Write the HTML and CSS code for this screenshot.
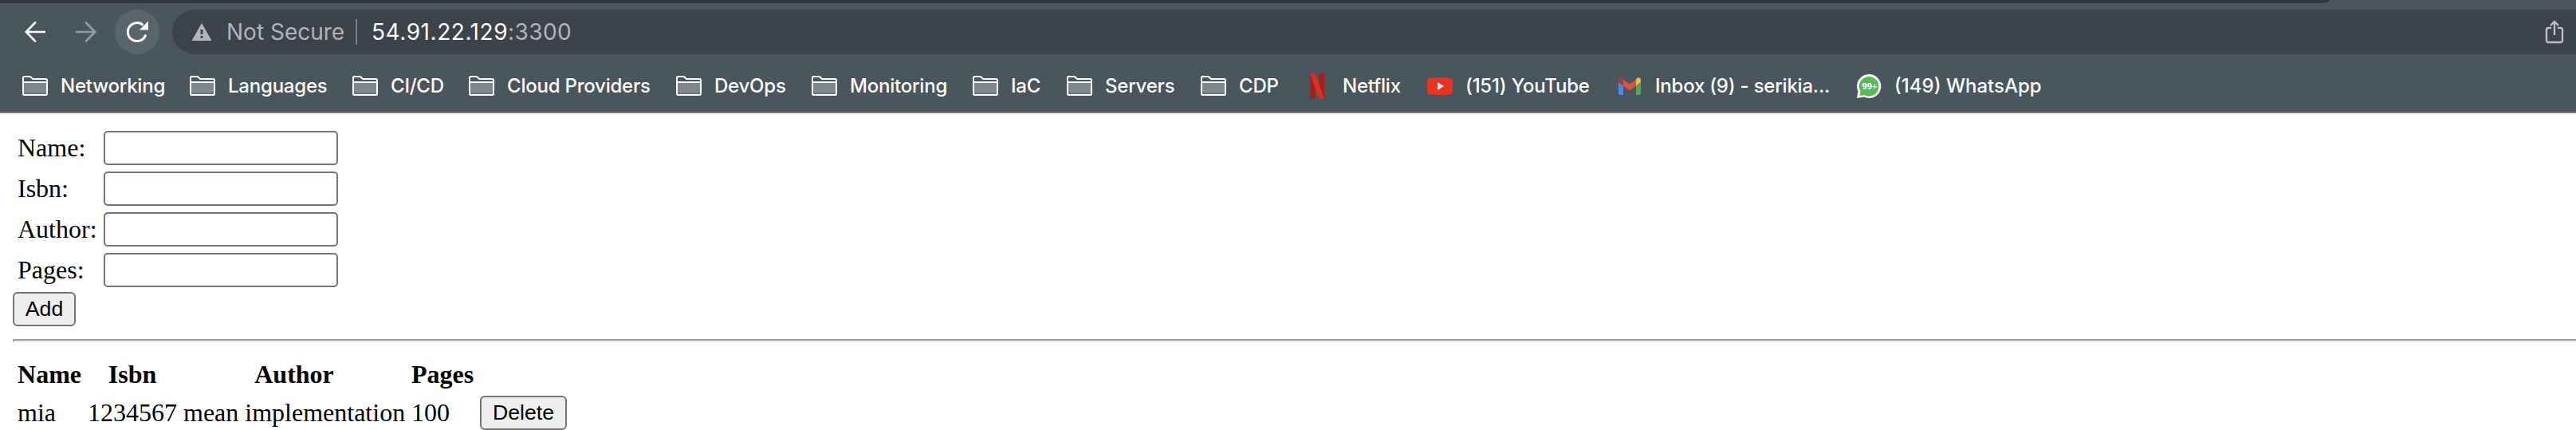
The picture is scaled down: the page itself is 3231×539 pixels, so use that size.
FILE: index.html
```html
<!DOCTYPE html>
<html lang="en">
<head>
<meta charset="utf-8">
<title>54.91.22.129:3300</title>
<link rel="stylesheet" href="styles.css">
</head>
<body>
<svg width="0" height="0" class="defs" aria-hidden="true">
  <symbol id="folder" viewBox="0 0 32 26">
    <path d="M1 8h30v14H1z" fill="#80888f"/>
    <path d="M1 21h30v3H1z" fill="#6f767f"/>
    <path d="M1 8h30M1 2.500q0-1.500 1.500-1.500H9q1 0 2 1l2 2h16.500q1.500 0 1.500 1.500v17q0 1.500-1.500 1.500h-27Q1 24 1 22.500z" fill="none" stroke="#fff" stroke-width="2"/>
  </symbol>
</svg>
<header class="chrome">
  <div class="tabstrip"></div>
  <div class="toolbar">
    <svg class="nav back" viewBox="0 0 26 26"><path d="M25 13H2M13 1.500 1.800 13 13 24.500" fill="none" stroke="#fff" stroke-width="2.700" stroke-linecap="round"/></svg>
    <svg class="nav forward" viewBox="0 0 26 26"><path d="M1 13h23M13 1.500 24.200 13 13 24.500" fill="none" stroke="#939aa0" stroke-width="2.700" stroke-linecap="round"/></svg>
    <span class="reload"><svg viewBox="0 0 28 28"><path d="M24.800 17.500A11.500 11.500 0 1 1 21.500 5.500" fill="none" stroke="#fff" stroke-width="3"/><path d="M28 .5V11.500H17z" fill="#fff"/></svg></span>
    <div class="omnibox">
      <svg class="warning" viewBox="0 0 26 22"><path fill-rule="evenodd" d="M13 0 25.500 22H.5zM11.500 8v6h3V8zM11.500 16v3h3v-3z" fill="#b3b7ba"/></svg>
      <span class="insecure">Not Secure</span>
      <span class="divider"></span>
      <span class="host">54.91.22.129</span><span class="port">:3300</span>
      <svg class="share" viewBox="0 0 24 30"><path d="M8 10H4.500Q2 10 2 12.500v13Q2 28 4.500 28h15q2.500 0 2.500-2.500v-13Q22 10 19.500 10H16M12 19V2M7 7l5-5 5 5" fill="none" stroke="#bdbdbd" stroke-width="2.400"/></svg>
    </div>
  </div>
  <nav class="bookmarks">
    <a class="b1"><svg class="folder"><use href="#folder"/></svg><span>Networking</span></a>
    <a class="b2"><svg class="folder"><use href="#folder"/></svg><span>Languages</span></a>
    <a class="b3"><svg class="folder"><use href="#folder"/></svg><span>CI/CD</span></a>
    <a class="b4"><svg class="folder"><use href="#folder"/></svg><span>Cloud Providers</span></a>
    <a class="b5"><svg class="folder"><use href="#folder"/></svg><span>DevOps</span></a>
    <a class="b6"><svg class="folder"><use href="#folder"/></svg><span>Monitoring</span></a>
    <a class="b7"><svg class="folder"><use href="#folder"/></svg><span>IaC</span></a>
    <a class="b8"><svg class="folder"><use href="#folder"/></svg><span>Servers</span></a>
    <a class="b9"><svg class="folder"><use href="#folder"/></svg><span>CDP</span></a>
    <a class="b10"><svg class="favicon" viewBox="0 0 32 32"><path d="M7 0h6.500v32H7zM18.500 0H25v32h-6.500z" fill="#a5211b"/><path d="M7 0h6.500L25 32h-6.500z" fill="#d93025"/></svg><span>Netflix</span></a>
    <a class="b11"><svg class="favicon" viewBox="0 0 32 32"><path d="M4 5.500Q16 4.500 28 5.500q4 .5 4 4.500v12q0 4-4 4.500-12 1-24 0Q0 26 0 22V10q0-4 4-4.500z" fill="#e93323"/><path d="M13 11.300v9.400l8-4.700z" fill="#fff"/></svg><span>(151) YouTube</span></a>
    <a class="b12"><svg class="favicon" viewBox="0 0 32 32"><path d="M2 11l6 4.500V27H4q-2 0-2-2z" fill="#4f86ec"/><path d="M30 11l-6 4.500V27h4q2 0 2-2z" fill="#58a55c"/><path d="M8 7.500l8 6 8-6v8l-8 6-8-6z" fill="#d95140"/><path d="M2 11V8.500C2 5 6 4 8 7.500v8z" fill="#b3362b"/><path d="M30 11V8.500C30 5 26 4 24 7.500v8z" fill="#f2bf42"/></svg><span>Inbox (9) - serikia...</span></a>
    <a class="b13"><svg class="favicon" viewBox="0 0 32 32"><path d="M16 1a15 15 0 1 1-6 28.600L1 31l1.500-8.500A15 15 0 0 1 16 1z" fill="#fff"/><path d="M16 4a12.300 12.300 0 1 1-5.500 23.200L4.500 28l1-5.500A12.300 12.300 0 0 1 16 4z" fill="#57bb55"/><text x="17" y="20" text-anchor="middle" class="count">99+</text></svg><span>(149) WhatsApp</span></a>
  </nav>
</header>
<main>
  <table class="form">
    <tr><td>Name:</td><td><input type="text"></td></tr>
    <tr><td>Isbn:</td><td><input type="text"></td></tr>
    <tr><td>Author:</td><td><input type="text"></td></tr>
    <tr><td>Pages:</td><td><input type="text"></td></tr>
  </table>
  <button class="add">Add</button>
  <hr>
  <table class="books">
    <colgroup><col class="c-name"><col class="c-isbn"><col class="c-author"><col class="c-pages"><col class="c-action"></colgroup>
    <tr><th>Name</th><th>Isbn</th><th>Author</th><th>Pages</th><th></th></tr>
    <tr><td>mia</td><td>1234567</td><td>mean implementation</td><td>100</td><td><button class="delete">Delete</button></td></tr>
  </table>
</main>
</body>
</html>
```
FILE: styles.css
```css
* { box-sizing: border-box; }
html, body { margin: 0; background: #fff; overflow: hidden; }
body { font: 32px/37px "Liberation Serif", "Times New Roman", serif; color: #000; }
.defs { display: block; position: absolute; }
.chrome { height: 142px; background: #49565e; border-bottom: 2px solid #737b82; font-family: Inter, sans-serif; color: #fff; }
.tabstrip { width: 2922px; height: 4px; background: #2e373b; border-bottom-right-radius: 12px 4px; }
.toolbar { display: flex; align-items: center; height: 72px; padding-left: 31px; }
.nav { flex: none; width: 26px; height: 26px; }
.forward { margin-left: 38px; }
.reload { display: flex; flex: none; align-items: center; justify-content: center; width: 56px; height: 56px; margin-left: 23px; border-radius: 50%; background: #59656d; }
.reload svg { width: 28px; height: 28px; }
.omnibox { display: flex; align-items: center; flex: 1; height: 56px; margin-left: 16px; padding: 0 15px 0 24px; border-radius: 28px 0 0 28px; background: #3c434a; font-size: 28px; line-height: 56px; white-space: nowrap; }
.warning { flex: none; width: 26px; height: 22px; }
.insecure { width: 162px; margin-left: 18px; color: #b1b4b7; }
.divider { width: 2px; height: 32px; background: #7d8286; margin-right: 18px; }
.host { letter-spacing: .55px; }
.port { letter-spacing: .4px; color: #b1b4b7; }
.share { flex: none; width: 24px; height: 30px; margin-left: auto; }
.bookmarks { display: flex; height: 64px; padding-left: 28px; font-size: 24px; font-weight: 500; line-height: 64px; letter-spacing: -.22px; white-space: nowrap; }
.bookmarks a { display: flex; align-items: center; flex: none; gap: 16px; }
.folder { width: 32px; height: 26px; }
.favicon { width: 32px; height: 32px; }
.count { font: bold 11px "Open Sans", sans-serif; letter-spacing: 0; fill: #fff; }
.b1 { width: 210px; }
.b2 { width: 204px; }
.b3 { width: 146px; }
.b4 { width: 260px; }
.b5 { width: 170px; }
.b6 { width: 202px; }
.b7 { width: 118px; }
.b8 { width: 168px; }
.b9 { width: 130px; }
.b10 { width: 154px; }
.b11 { width: 238px; }
.b12 { width: 300px; }
.b13 { letter-spacing: 0; }
main { padding: 16px; }
table { border-spacing: 4px; border-collapse: separate; }
td, th { padding: 2px; }
.form td:first-child { width: 104px; padding-bottom: 4px; }
.form td { height: 47px; line-height: 36px; }
input { display: block; width: 294px; height: 43px; padding: 0; border: 2px solid #767676; border-radius: 5px; background: #fff; }
button { display: block; height: 43px; padding: 0 0 2px; border: 2px solid #767676; border-radius: 6px; background: #efefef; color: #000; font: 26.667px/36px "Liberation Sans", Arial, sans-serif; }
.add { width: 79px; }
hr { width: calc(100% + 18px); height: 4px; margin: 16px 0; border: 2px solid; border-color: #9a9a9a #eee #eee #9a9a9a; }
.books { table-layout: fixed; width: 697px; }
.c-name { width: 84px; }
.c-isbn { width: 116px; }
.c-author { width: 282px; }
.c-pages { width: 82px; }
.c-action { width: 113px; }
.books td { white-space: nowrap; }
.delete { width: 109px; }
```
